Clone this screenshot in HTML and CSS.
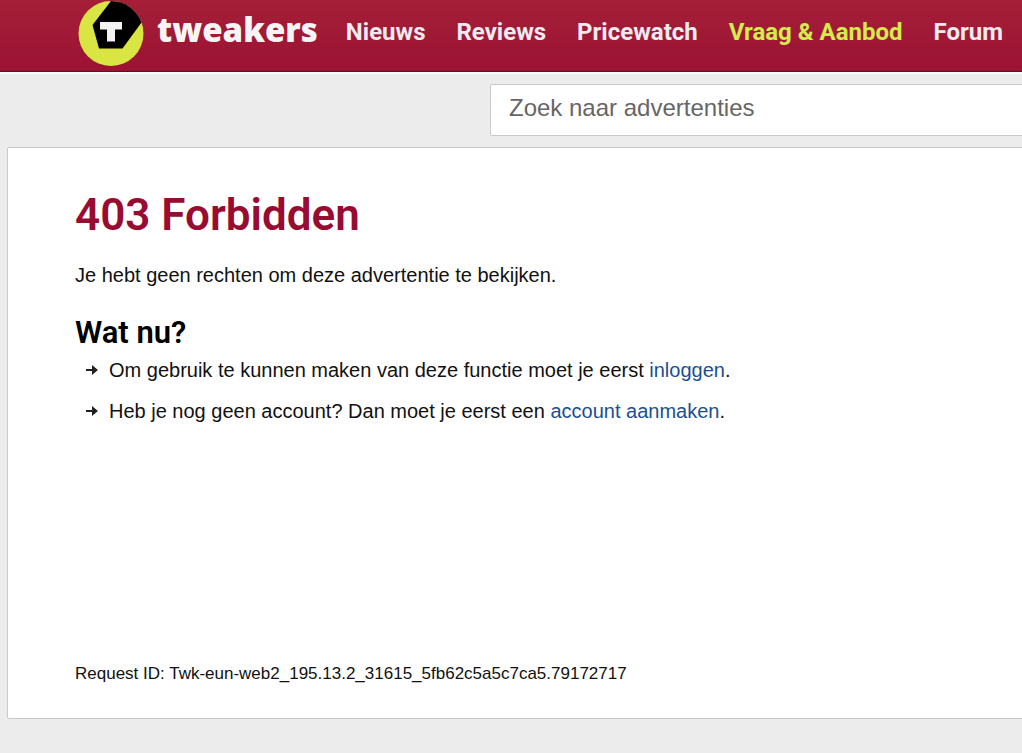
FILE: index.html
```html
<!DOCTYPE html>
<html lang="nl">
    <head>
        <meta charset="UTF-8" />
        <meta name="viewport" content="width=device-width, initial-scale=1.0" />
        <title>403 Forbidden - Tweakers</title>

        <link rel="stylesheet" href="styles.css">
    </head>
    <body>
        <header class="top_bar">
            <a class="logo" href="/">
                <svg class="logo_mark" viewBox="0 0 66 66" aria-hidden="true">
                    <circle cx="33" cy="33.500" r="32.500" fill="#d9e543" />
                    <path d="M33 1 A32.500 32.500 0 0 1 63.500 22.500 L44.500 48.500 H21 L14.500 25 Z" fill="#000" />
                    <path d="M22 22 H44 V29.500 H37 V41.500 H29 V29.500 H22 Z" fill="#f2f2f2" />
                </svg>
                <span>tweakers</span>
            </a>
            <nav class="menu">
                <a href="/nieuws">Nieuws</a>
                <a href="/reviews">Reviews</a>
                <a href="/pricewatch">Pricewatch</a>
                <a class="active" href="/aanbod">Vraag &amp; Aanbod</a>
                <a href="/forum">Forum</a>
            </nav>
        </header>

        <form class="search_bar" action="/aanbod/zoeken">
            <input type="search" name="keyword" aria-label="Zoek naar advertenties" placeholder="Zoek naar advertenties" />
        </form>

        <main class="content">
            <h1>403 Forbidden</h1>
            <p>Je hebt geen rechten om deze advertentie te bekijken.</p>
            <h2>Wat nu?</h2>
            <ul class="options">
                <li>
                    <svg class="arrow" viewBox="0 0 14 14" aria-hidden="true">
                        <path d="M1 6 H7 V2 L13 7 L7 12 V8 H1 Z" />
                    </svg>
                    <span>Om gebruik te kunnen maken van deze functie moet je eerst <a href="/login">inloggen</a>.</span>
                </li>
                <li>
                    <svg class="arrow" viewBox="0 0 14 14" aria-hidden="true">
                        <path d="M1 6 H7 V2 L13 7 L7 12 V8 H1 Z" />
                    </svg>
                    <span>Heb je nog geen account? Dan moet je eerst een <a href="/register">account aanmaken</a>.</span>
                </li>
            </ul>
            <p class="request_id">Request ID: Twk-eun-web2_195.13.2_31615_5fb62c5a5c7ca5.79172717</p>
        </main>
    </body>
</html>
```
FILE: styles.css
```css
body {
    margin: 0;
    font-family: "Liberation Sans", Arial, sans-serif;
    font-size: 20px;
    line-height: 24px;
    background: #ececec;
    color: #111;
    overflow-x: hidden;
}

a {
    color: #1b4f93;
    text-decoration: none;
}

a:hover {
    text-decoration: underline;
}

.top_bar {
    display: flex;
    gap: 28px;
    height: 72px;
    padding-left: 78px;
    background: linear-gradient(#a51f38, #9b1233);
    border-bottom: 1px solid #6b0b22;
    box-shadow: 0 2px 0 #fafafa;
    box-sizing: border-box;
}

.logo {
    display: flex;
    gap: 13px;
    color: #f7f4f5;
    font-family: "Noto Sans", sans-serif;
    font-size: 33px;
    font-weight: 900;
    line-height: 60px;
}

.logo_mark {
    width: 66px;
    height: 66px;
}

.menu {
    display: flex;
    gap: 31px;
    font-family: Roboto, sans-serif;
    font-size: 24px;
    font-weight: bold;
    line-height: 64px;
    white-space: nowrap;
}

.menu a {
    color: #eeeaf0;
}

.menu .active {
    color: #d3ec4d;
}

.search_bar {
    display: flex;
    padding: 12px 0 11px 490px;
}

.search_bar input {
    flex: 1;
    min-width: 0;
    height: 52px;
    margin-right: -4px;
    padding: 0 18px 4px;
    font-family: inherit;
    font-size: 24px;
    background: white;
    border: 1px solid #c9c9c9;
    border-radius: 2px;
    box-sizing: border-box;
    appearance: none;
}

.search_bar input::placeholder {
    color: #666;
    opacity: 1;
}

.content {
    margin-left: 7px;
    margin-right: -4px;
    padding: 40px 67px 32px;
    background: white;
    border: 1px solid #c9c9c9;
    border-radius: 2px;
}

h1 {
    margin: 0 0 21px;
    font-family: Roboto, sans-serif;
    font-size: 44px;
    font-weight: 600;
    line-height: 54px;
    color: #990c32;
}

h2 {
    margin: 28px 0 7px;
    font-family: Roboto, sans-serif;
    font-size: 31px;
    font-weight: 600;
    line-height: 36px;
    color: black;
}

p {
    margin: 0;
}

.options {
    margin: 0 0 239px;
    padding: 0 0 0 10px;
    list-style: none;
}

.options li {
    display: flex;
    align-items: center;
    gap: 10px;
    margin-bottom: 17px;
}

.arrow {
    width: 14px;
    height: 14px;
    fill: #222;
}

.request_id {
    font-size: 17px;
}
```
